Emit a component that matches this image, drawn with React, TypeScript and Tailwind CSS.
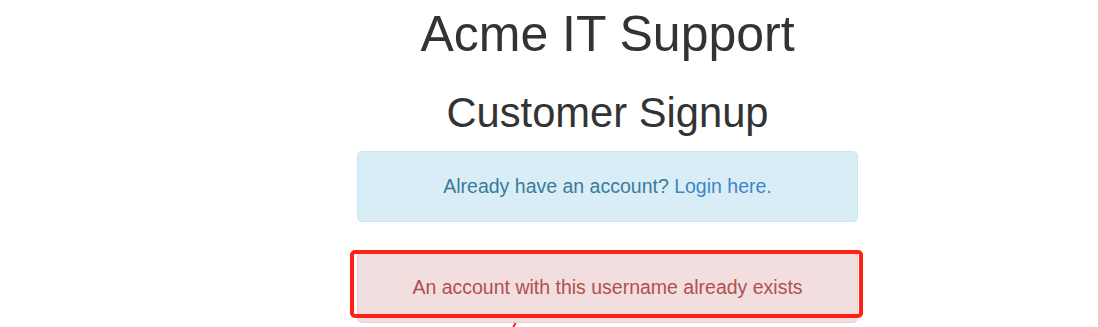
export default function App() {
  return (
    <div className="min-h-[327px] w-full overflow-hidden bg-white pt-[7px] font-['Liberation_Sans',Arial,sans-serif] text-[#333]">
      <div className="ml-[357px] flex w-[501px] flex-col">
        <h1 className="text-center text-[50px] leading-[55px] font-normal">Acme IT Support</h1>
        <h2 className="mt-[28px] text-center text-[41.7px] leading-[46px] font-normal">Customer Signup</h2>

        <div className="mt-[15px] rounded-[5px] border border-[#c6e8f2] bg-[#d9edf7] py-[20px] text-center text-[19.5px] leading-[29px] text-[#3b7a9b]">
          Already have an account? <a href="#" className="text-[#3d86c6]">Login here.</a>
        </div>

        <div className="relative mt-[30px] rounded-[5px] border border-[#ebccd1] bg-[#f2dede] py-[20px] text-center text-[19.5px] leading-[29px] text-[#b0504e]">
          An account with this username already exists
          {/* annotation drawn over the alert */}
          <div className="pointer-events-none absolute -top-[3px] -right-[6px] bottom-[4px] -left-[8px] rounded-[5px] border-[4px] border-[#ff2116]" />
          <svg className="absolute top-[69px] left-[153px]" width="6" height="8" viewBox="0 0 6 8">
            <path d="M1 8 L4.5 1" stroke="#ff2116" strokeWidth="2" />
          </svg>
        </div>
      </div>
    </div>
  );
}
